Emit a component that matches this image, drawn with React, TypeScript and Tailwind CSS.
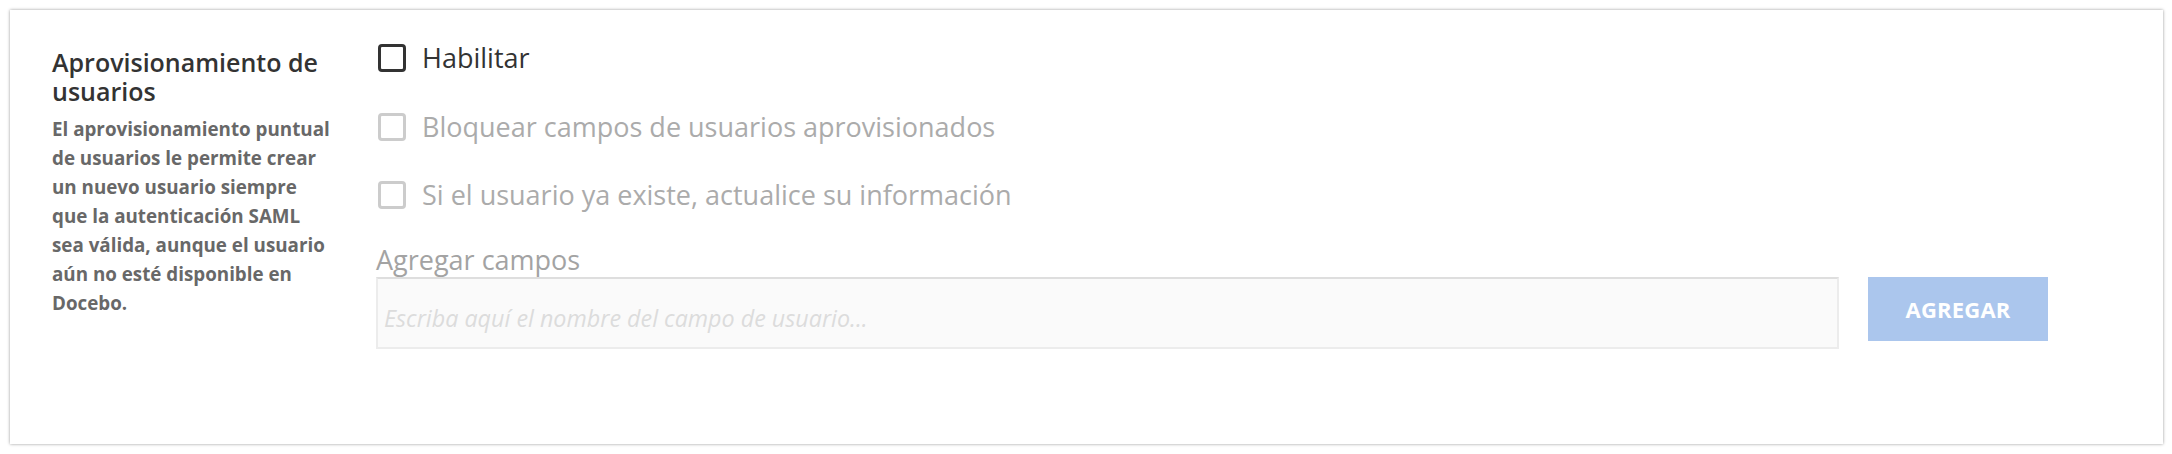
import { useState } from 'react'

const descriptionLines = [
  'El aprovisionamiento puntual',
  'de usuarios le permite crear',
  'un nuevo usuario siempre',
  'que la autenticación SAML',
  'sea válida, aunque el usuario',
  'aún no esté disponible en',
  'Docebo.',
]

export default function App() {
  const [enabled, setEnabled] = useState(false)
  const [field, setField] = useState('')

  return (
    <div className="min-h-screen bg-white p-[10px]" style={{ fontFamily: '"Open Sans", "Liberation Sans", sans-serif' }}>
      <div className="flex h-[434px] w-[2153px] bg-white pl-[42px] pr-[115px] shadow-[0_0_3px_rgba(0,0,0,0.4)]">
        {/* Left description column */}
        <div className="w-[286px] shrink-0 pt-[38px]">
          <h2 className="text-[25px] leading-[29px] font-semibold text-[#333333]">Aprovisionamiento de usuarios</h2>
          <p className="mt-[9px] text-[18.8px] leading-[29px] font-bold text-[#686868]">
            {descriptionLines.map((line) => (
              <span key={line} className="block whitespace-nowrap">
                {line}
              </span>
            ))}
          </p>
        </div>

        {/* Right settings column */}
        <div className="ml-[38px] flex flex-1 flex-col pt-[33px]">
          <CheckRow label="Habilitar" checked={enabled} onChange={setEnabled} />
          <div className="mt-[39px]">
            <CheckRow label="Bloquear campos de usuarios aprovisionados" disabled />
          </div>
          <div className="mt-[38px]">
            <CheckRow label="Si el usuario ya existe, actualice su información" disabled />
          </div>

          <label className="mt-[33px] block text-[27px] leading-[34px] text-[#a3a3a3]">Agregar campos</label>
          <div className="flex items-start gap-[29px]">
            <input
              value={field}
              onChange={(e) => setField(e.target.value)}
              placeholder="Escriba aquí el nombre del campo de usuario..."
              className="box-border h-[72px] flex-1 border-2 border-[#ececec] border-t-[#dedede] bg-[#fafafa] pt-[10px] pb-0 pl-[6px] text-[23.3px] outline-none placeholder:italic placeholder:text-[#dcdcdc]"
            />
            <button className="h-[64px] w-[180px] shrink-0 bg-[#abc6ed] text-[22px] font-bold tracking-[0.2px] text-white">
              AGREGAR
            </button>
          </div>
        </div>
      </div>
    </div>
  )
}

function CheckRow({
  label,
  checked = false,
  disabled = false,
  onChange,
}: {
  label: string
  checked?: boolean
  disabled?: boolean
  onChange?: (v: boolean) => void
}) {
  return (
    <button
      type="button"
      onClick={() => !disabled && onChange?.(!checked)}
      className="flex h-[30px] items-center gap-[16px] pl-[2px] text-left"
    >
      <span
        className={`box-border block h-[28px] w-[28px] shrink-0 rounded-[4px] border-[3px] ${
          disabled ? 'border-[#cccccc]' : 'border-[#333333]'
        } ${checked ? 'bg-[#333333]' : 'bg-white'}`}
      />
      <span className={`text-[27px] leading-[30px] ${disabled ? 'text-[#ababab]' : 'text-[#333333]'}`}>{label}</span>
    </button>
  )
}
